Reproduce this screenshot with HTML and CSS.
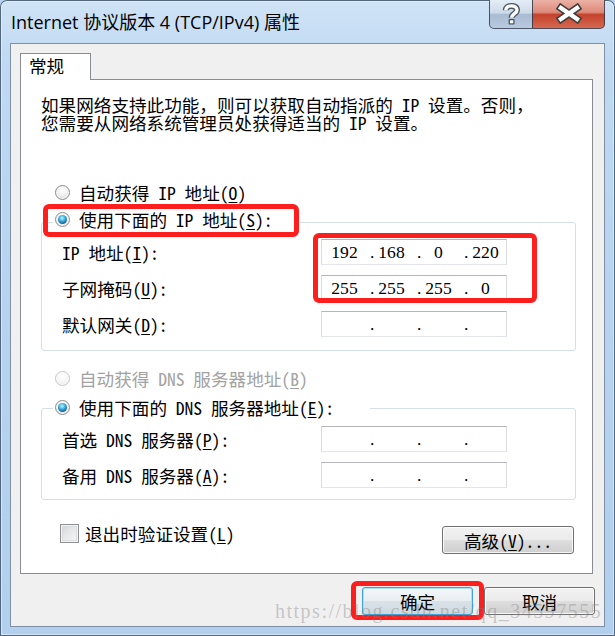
FILE: index.html
```html
<!DOCTYPE html>
<html lang="zh-CN">
<head>
<meta charset="utf-8">
<title>Internet 协议版本 4 (TCP/IPv4) 属性</title>
<link rel="stylesheet" href="styles.css">
</head>
<body>
<div class="window">
  <div class="titlebar">
    <div class="title">Internet 协议版本 4 (TCP/IPv4) 属性</div>
    <div class="caption">
      <div class="cbtn help">
        <svg width="43" height="28" viewBox="0 0 43 28">
          <g fill="none" stroke-linecap="butt" stroke-linejoin="round">
            <path d="M15.8 10.2 C15.8 4.6 27 4.4 27 10 C27 13.6 21.6 13.8 21.6 17.8" stroke="#4b5563" stroke-width="6"/>
            <path d="M15.8 10.2 C15.8 4.6 27 4.4 27 10 C27 13.6 21.6 13.8 21.6 17.8" stroke="#ffffff" stroke-width="3.4"/>
          </g>
          <rect x="18.6" y="19" width="6" height="5.6" rx="1" fill="#4b5563"/>
          <rect x="19.9" y="20.3" width="3.4" height="3" fill="#ffffff"/>
        </svg>
      </div>
      <div class="cbtn close">
        <svg width="72" height="28" viewBox="0 0 72 28">
          <g stroke-linecap="square">
            <path d="M28 8 L44 19 M28 19 L44 8" stroke="#3e3e3e" stroke-width="7.5"/>
            <path d="M28 8 L44 19 M28 19 L44 8" stroke="#ffffff" stroke-width="4.4"/>
          </g>
        </svg>
      </div>
    </div>
  </div>

  <div class="client">
    <div class="tabs"><div class="tab">常规</div></div>
    <div class="panel">
      <p class="desc"><span>如果网络支持此功能，则可以获取自动指派的 IP 设置。否则，</span><span>您需要从网络系统管理员处获得适当的 IP 设置。</span></p>

      <div class="opt opt-ip-auto"><span class="radio"></span><span>自动获得 IP 地址(<u>O</u>)</span></div>

      <fieldset class="group group-ip">
        <legend class="legend legend-ip"><span class="lg"><span class="radio checked"></span><span>使用下面的 IP 地址(<u>S</u>):</span></span></legend>
        <div class="rows">
          <div class="row"><span class="lbl">IP 地址(<u>I</u>):</span>
            <div class="ipbox"><span class="seg">192</span><span class="dot">.</span><span class="seg">168</span><span class="dot">.</span><span class="seg">0</span><span class="dot">.</span><span class="seg">220</span></div>
          </div>
          <div class="row"><span class="lbl">子网掩码(<u>U</u>):</span>
            <div class="ipbox"><span class="seg">255</span><span class="dot">.</span><span class="seg">255</span><span class="dot">.</span><span class="seg">255</span><span class="dot">.</span><span class="seg">0</span></div>
          </div>
          <div class="row"><span class="lbl">默认网关(<u>D</u>):</span>
            <div class="ipbox"><span class="seg"></span><span class="dot">.</span><span class="seg"></span><span class="dot">.</span><span class="seg"></span><span class="dot">.</span><span class="seg"></span></div>
          </div>
        </div>
      </fieldset>

      <div class="opt opt-dns-auto disabled"><span class="radio dis"></span><span>自动获得 DNS 服务器地址(<u>B</u>)</span></div>

      <fieldset class="group group-dns">
        <legend class="legend legend-dns"><span class="lg"><span class="radio checked"></span><span>使用下面的 DNS 服务器地址(<u>E</u>):</span></span></legend>
        <div class="rows">
          <div class="row"><span class="lbl">首选 DNS 服务器(<u>P</u>):</span>
            <div class="ipbox"><span class="seg"></span><span class="dot">.</span><span class="seg"></span><span class="dot">.</span><span class="seg"></span><span class="dot">.</span><span class="seg"></span></div>
          </div>
          <div class="row"><span class="lbl">备用 DNS 服务器(<u>A</u>):</span>
            <div class="ipbox"><span class="seg"></span><span class="dot">.</span><span class="seg"></span><span class="dot">.</span><span class="seg"></span><span class="dot">.</span><span class="seg"></span></div>
          </div>
        </div>
      </fieldset>

      <div class="foot">
        <div class="chk"><span class="chkbox"></span><span>退出时验证设置(<u>L</u>)</span></div>
        <button class="btn btn-adv">高级(<u>V</u>)...</button>
      </div>
    </div>

    <div class="bottom">
      <button class="btn btn-ok">确定</button>
      <button class="btn btn-cancel">取消</button>
    </div>
  </div>

  <div class="mark mark-s"></div>
  <div class="mark mark-ip"></div>
  <div class="mark mark-ok"></div>
  <div class="wm">https://blog.csdn.net/qq_34597555</div>
</div>
</body>
</html>
```

FILE: styles.css
```css
* { box-sizing: border-box; }
html, body { margin: 0; padding: 0; }
body {
  width: 615px;
  height: 636px;
  overflow: hidden;
  background: #b5d2ef;
  font-family: "Noto Sans Mono CJK SC", "Noto Sans CJK SC", sans-serif;
  font-size: 17.6px;
  color: #000;
}
u { text-decoration: underline; text-underline-offset: 2px; text-decoration-thickness: 1px; }

.window {
  position: relative;
  width: 615px;
  height: 636px;
  border-radius: 7px 7px 0 0;
  background: linear-gradient(180deg, #d0e3f6 0, #bfd9f2 10%, #b7d3ef 45%, #b2cfed 100%);
  box-shadow: inset 0 0 0 1px #52667d, inset 0 0 0 2px rgba(255,255,255,0.45);
}

.titlebar { display: flex; height: 43px; }
.title {
  padding: 10px 0 0 11px;
  font-family: "Open Sans", "Noto Sans CJK SC", sans-serif;
  font-size: 18px;
  line-height: 24px;
  color: #000;
}
.caption { margin-left: auto; margin-right: 10px; display: flex; height: 29px; }
.cbtn { height: 29px; border: 1px solid rgba(38,52,72,0.8); border-top: none; }
.cbtn svg { display: block; }
.help {
  width: 43px;
  border-right: none;
  border-radius: 0 0 0 5px;
  background: linear-gradient(180deg, #e4edf6 0, #ccdae9 46%, #a9bcd2 52%, #b8cadf 100%);
}
.close {
  width: 73px;
  border-radius: 0 0 5px 0;
  background: linear-gradient(180deg, #ebb1a5 0, #de8a7a 44%, #c5432c 52%, #d5684f 100%);
}

.client {
  margin-left: 10px;
  width: 595px;
  height: 584px;
  border: 1px solid #7f90a5;
  background: #f0f0f0;
  padding: 9px 0 0 9px;
}

.tabs { display: flex; height: 26px; }
.tab {
  position: relative;
  z-index: 1;
  width: 71px;
  height: 27px;
  border: 1px solid #898c95;
  border-bottom: none;
  background: #fff;
  padding-left: 8px;
  line-height: 24px;
}

.panel {
  width: 573px;
  height: 495px;
  border: 1px solid #898c95;
  background: #fff;
}

.desc { margin: 16px 0 0 20px; line-height: 18px; }
.desc span { display: block; white-space: nowrap; }

.opt { display: flex; align-items: center; gap: 9px; height: 22px; margin-left: 34px; white-space: nowrap; }
.opt-ip-auto { margin-top: 49px; }
.opt-dns-auto { margin-top: 16px; }
.disabled { color: #a2a2a2; }

.group {
  margin: 0 0 0 20px;
  width: 535px;
  min-width: 0;
  border: 1px solid #d5dfe5;
  border-radius: 3px;
}
.group-ip { margin-top: 5px; padding: 3px 0 13px 11px; }
.group-dns { margin-top: 7px; padding: 6px 0 11px 11px; }

.legend { padding: 0 0 0 2px; margin: 0; }
.legend-ip { width: 247px; padding-bottom: 6px; }
.legend-dns { width: 317px; padding-bottom: 2px; }
.lg { display: flex; align-items: center; gap: 9px; height: 22px; white-space: nowrap; }

.rows { margin-left: 9px; display: flex; flex-direction: column; gap: 10px; }
.row { display: flex; align-items: center; height: 26px; }
.lbl { width: 259px; white-space: nowrap; }

.ipbox {
  width: 186px;
  height: 26px;
  border: 1px solid;
  border-color: #b4b6bb #d9dbe0 #e3e5ea #d9dbe0;
  background: #fff;
  display: flex;
  align-items: center;
  padding-left: 4.5px;
  font-family: "Liberation Serif", serif;
  font-size: 17.6px;
}
.seg { width: 36px; text-align: center; flex: none; }
.dot { width: 11px; padding-left: 7.5px; flex: none; }

.radio {
  position: relative;
  flex: none;
  width: 15px;
  height: 15px;
  border-radius: 50%;
  border: 1px solid #8a8c8e;
  background: radial-gradient(circle at 50% 35%, #ffffff 0, #f0f0f0 45%, #d3d3d3 100%);
  box-shadow: inset 0 0 0 1px rgba(255,255,255,0.8);
}
.radio.checked::after {
  content: "";
  position: absolute;
  left: 2px;
  top: 2px;
  width: 9px;
  height: 9px;
  border-radius: 50%;
  background: radial-gradient(circle at 45% 35%, #c8f3ff 0, #56c1ee 30%, #1773a8 65%, #0b3f62 100%);
}
.radio.dis {
  border-color: #c6c6c6;
  background: radial-gradient(circle at 50% 35%, #ffffff 0, #f6f6f6 50%, #e6e6e6 100%);
}

.foot {
  display: flex;
  justify-content: space-between;
  align-items: flex-start;
  margin: 24px 18px 0 39px;
}
.chk { display: flex; align-items: center; gap: 6px; height: 19px; white-space: nowrap; }
.chkbox {
  flex: none;
  width: 19px;
  height: 19px;
  border: 1px solid #8e8f8f;
  background: linear-gradient(135deg, #d2d5da 0, #e8e9ea 50%, #f6f6f6 100%);
  box-shadow: inset 0 0 0 1px #f4f4f4, inset 0 0 0 2px #dadcdf;
}

.btn {
  display: flex;
  align-items: center;
  justify-content: center;
  height: 28px;
  padding: 0;
  font: inherit;
  color: #000;
  border: 1px solid #707070;
  border-radius: 3px;
  background: linear-gradient(180deg, #f2f2f2 0, #ebebeb 48%, #dddddd 52%, #cfcfcf 100%);
  box-shadow: inset 0 0 0 1px rgba(255,255,255,0.8);
  white-space: nowrap;
}
.btn-adv { margin-top: 2px; width: 132px; }

.bottom { display: flex; justify-content: flex-end; gap: 11px; margin: 13px 9px 0 0; }
.btn-ok, .btn-cancel { width: 111px; }
.btn-ok {
  border-color: #3ea4d8;
  box-shadow: inset 0 0 0 1px #aee0f7;
  background: linear-gradient(180deg, #f3f7fa 0, #e9eef2 48%, #dae2e8 52%, #cdd8df 100%);
}

.mark {
  position: absolute;
  border: 5px solid #fd1e1e;
  border-radius: 6px;
  pointer-events: none;
}
.mark-s { left: 43px; top: 204px; width: 256px; height: 33px; }
.mark-ip { left: 313px; top: 233px; width: 224px; height: 70px; }
.mark-ok { left: 351px; top: 581px; width: 133px; height: 39px; }

.wm {
  position: absolute;
  left: 275px;
  top: 600px;
  font-family: "Liberation Serif", serif;
  font-size: 20px;
  letter-spacing: 1.5px;
  color: rgba(130,130,130,0.4);
  white-space: nowrap;
  pointer-events: none;
}
```
